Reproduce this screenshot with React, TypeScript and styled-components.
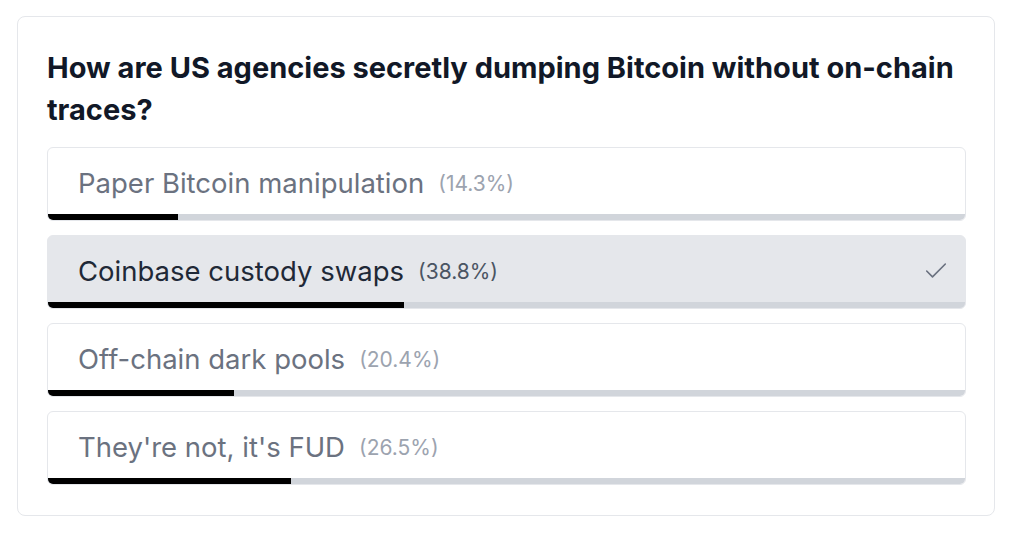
import styled, { createGlobalStyle } from 'styled-components';
import { Check } from 'lucide-react';

type Choice = {
    label: string,
    percent: number,
    selected?: boolean,
};

const choices: Choice[] = [
    { label: 'Paper Bitcoin manipulation', percent: 14.3 },
    { label: 'Coinbase custody swaps', percent: 38.8, selected: true },
    { label: 'Off-chain dark pools', percent: 20.4 },
    { label: "They're not, it's FUD", percent: 26.5 },
];

const GlobalStyle = createGlobalStyle`
    body {
        margin: 0;
        padding: 16px 15px 16px 17px;
        background: #ffffff;
        font-family: Inter, "Noto Sans", sans-serif;
    }
`;

const Card = styled.div`
    border: 1px solid #e5e7eb;
    border-radius: 8px;
    padding: 30px 28px 30px 29px;
    background: #ffffff;
`;

const Question = styled.h2`
    margin: 0 0 16px;
    font-size: 29px;
    line-height: 42px;
    font-weight: 700;
    color: #111827;
`;

const ChoiceList = styled.div`
    display: flex;
    flex-direction: column;
    gap: 14px;
`;

const ChoiceBox = styled.div<{ $selected?: boolean }>`
    display: flex;
    flex-direction: column;
    border: 1px solid #e5e7eb;
    border-radius: 6px;
    overflow: hidden;
    background: ${(p) => (p.$selected ? '#e5e7eb' : '#ffffff')};
`;

const ChoiceRow = styled.div`
    box-sizing: border-box;
    display: flex;
    align-items: center;
    height: 66px;
    padding: 4px 15px 0 30px;
`;

const Label = styled.span<{ $selected?: boolean }>`
    font-size: 27.5px;
    color: ${(p) => (p.$selected ? '#1f2937' : '#6b7280')};
`;

const Percent = styled.span<{ $selected?: boolean }>`
    margin-left: 14px;
    font-size: 21px;
    color: ${(p) => (p.$selected ? '#4b5563' : '#9ca3af')};
`;

const Tick = styled.span`
    margin-left: auto;
    display: flex;
    color: #6b7280;
`;

const Track = styled.div`
    height: 7px;
    margin: 0 -1px -1px;
    background: #d1d5db;
`;

const Fill = styled.div`
    height: 100%;
    background: #000000;
`;

function App(): JSX.Element {
    return (
        <>
            <GlobalStyle />
            <Card>
                <Question>How are US agencies secretly dumping Bitcoin without on-chain traces?</Question>
                <ChoiceList>
                    {choices.map((c) => (
                        <ChoiceBox key={c.label} $selected={c.selected}>
                            <ChoiceRow>
                                <Label $selected={c.selected}>{c.label}</Label>
                                <Percent $selected={c.selected}>{`(${c.percent}%)`}</Percent>
                                {c.selected && (
                                    <Tick>
                                        <Check size={28} strokeWidth={1.4} />
                                    </Tick>
                                )}
                            </ChoiceRow>
                            <Track>
                                <Fill style={{ width: `${c.percent}%` }} />
                            </Track>
                        </ChoiceBox>
                    ))}
                </ChoiceList>
            </Card>
        </>
    );
}

export default App;
